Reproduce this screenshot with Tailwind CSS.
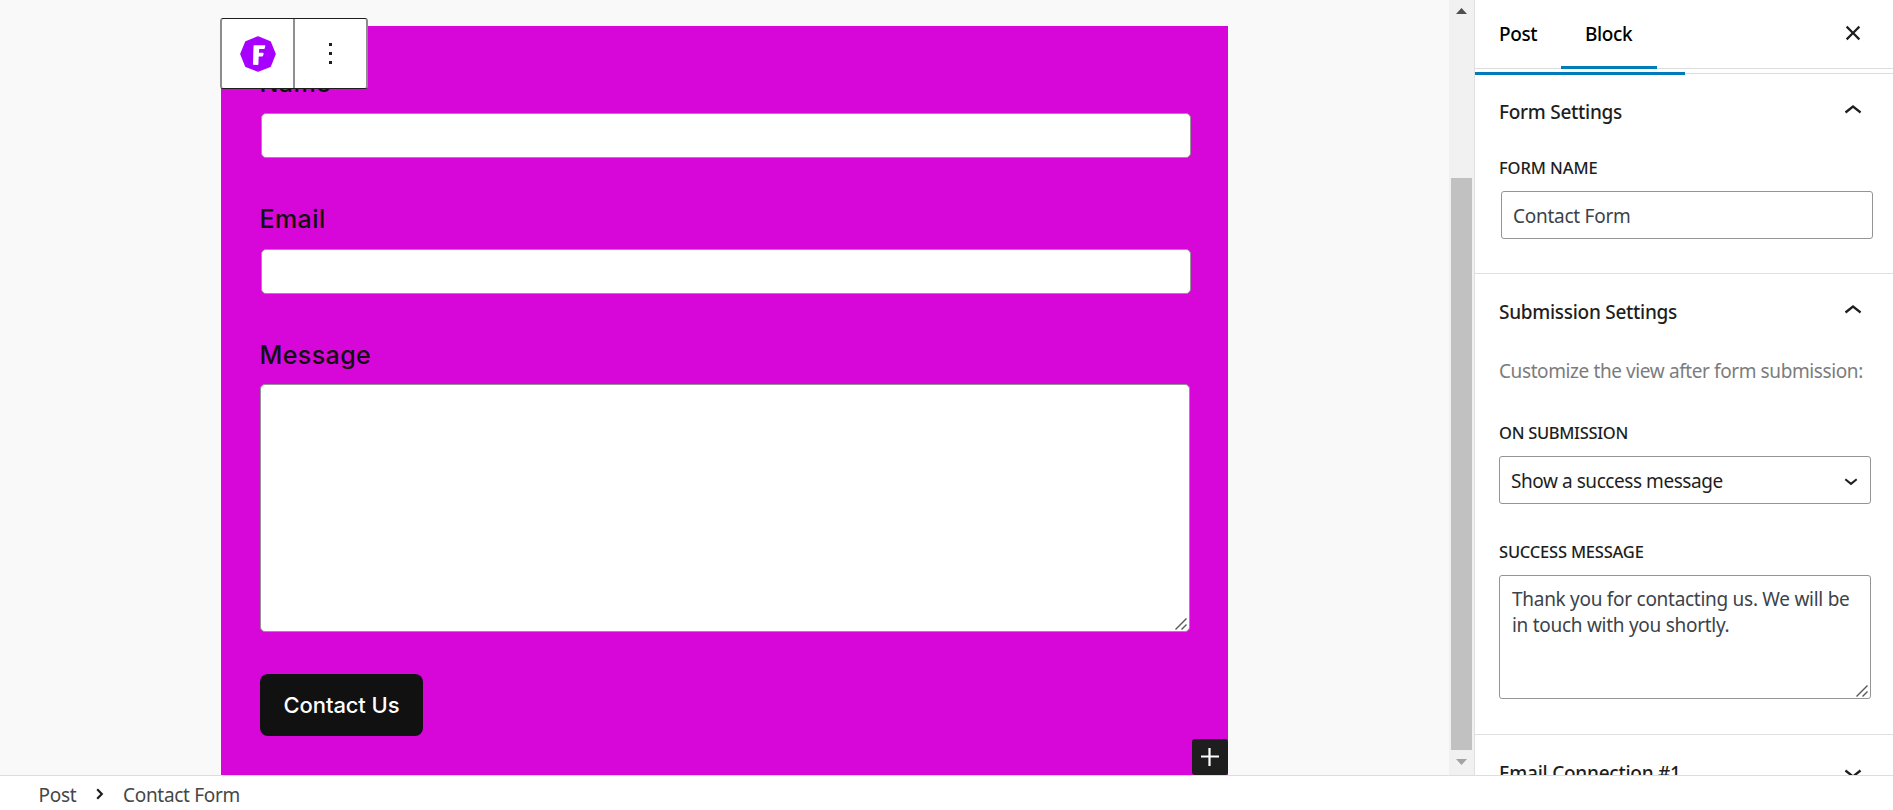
<!DOCTYPE html>
<html lang="en">
<head>
<meta charset="utf-8">
<title>Contact Form</title>
<script src="https://cdn.jsdelivr.net/npm/@tailwindcss/browser@4"></script>
</head>
<body class="flex h-[810px] w-[1893px] flex-col overflow-hidden bg-white font-['Noto_Sans',sans-serif] text-[19px] leading-[26px] text-[#1e1e1e]">
<div class="flex h-[775px] shrink-0 overflow-hidden">
  <!-- Editor canvas -->
  <main class="relative w-[1449px] bg-[#f9f9f9] pt-[26px] pl-[221px]">
    <form class="relative h-[749px] w-[1007px] bg-[#d607d8] pt-[42px] pl-[39px] font-['Inter',sans-serif] text-[#111]">
      <div class="-ml-[0.5px] h-[30px] text-[25px] leading-[30px] font-medium tracking-[0.4px]">Name</div>
      <div class="mt-[15px] ml-px h-[45px] w-[930px] rounded-[5px] border border-[#949494] bg-white"></div>
      <div class="mt-[46px] -ml-[0.5px] h-[30px] text-[25px] leading-[30px] font-medium tracking-[0.4px]">Email</div>
      <div class="mt-[15px] ml-px h-[45px] w-[930px] rounded-[5px] border border-[#949494] bg-white"></div>
      <div class="mt-[46px] -ml-[0.5px] h-[30px] text-[25px] leading-[30px] font-medium tracking-[0.4px]">Message</div>
      <div class="mt-[14px] flex h-[248px] w-[930px] items-end justify-end rounded-[5px] border border-[#949494] bg-white pr-[2px] pb-px">
        <svg class="h-[12px] w-[12px]" viewBox="0 0 12 12" fill="none" stroke="#555" stroke-width="1.4"><path d="M.5 11.5 11.5.5M6.5 11.5l5-5"/></svg>
      </div>
      <button type="button" class="mt-[42px] flex h-[62px] w-[163px] items-center justify-center rounded-[8px] bg-[#111] text-[22px] leading-[28px] font-medium tracking-[-0.1px] text-white">Contact Us</button>
      <button type="button" class="absolute right-0 bottom-0 flex h-[36px] w-[36px] items-center justify-center rounded-[3px] bg-[#1e1e1e]">
        <svg class="h-[18px] w-[18px]" viewBox="0 0 18 18" fill="#fff"><path d="M7.4 0h2.2v7.4H18v2.2H9.6V18H7.4V9.6H0V7.4h7.4z"/></svg>
      </button>
    </form>
    <!-- Block toolbar -->
    <div class="absolute top-[18px] left-[220px] flex h-[71px] w-[148px] rounded-[3px] border-x-2 border-y border-x-[#8c8c8c] border-y-[#1e1e1e] bg-white">
      <div class="flex w-[73px] items-center justify-center border-r-2 border-[#8f8f8f]">
        <svg class="h-[36px] w-[36px]" viewBox="0 0 36 36"><path fill="#a800ff" stroke="#a800ff" stroke-width="1.5" stroke-linejoin="round" d="M18 .9 30.2 6 35.1 18 30.2 30.2 18 35.1 5.8 30.2.9 18 5.8 6z"/><path fill="#fff" d="M14.4 9.2h10.3q.8 0 .6.8l-.5 2.2q-.2.8-1 .8h-4.6l-.3 3.8h4q.8 0 .7.8l-.4 2q-.2.8-.9.8h-3.6l-.3 7.8q-.1.9-1 .8l-3.5-.2q-.9 0-.9-.9l.5-17.9q0-.8.9-.8z"/></svg>
      </div>
      <div class="flex grow flex-col items-center justify-center gap-[6px]">
        <span class="h-[3px] w-[3px] bg-[#1e1e1e]"></span><span class="h-[3px] w-[3px] bg-[#1e1e1e]"></span><span class="h-[3px] w-[3px] bg-[#1e1e1e]"></span>
      </div>
    </div>
  </main>
  <!-- Scrollbar -->
  <div class="flex w-[25px] flex-col items-start bg-[#f1f1f1] pt-[8px]">
    <svg class="ml-[7px] h-[6px] w-[11px]" viewBox="0 0 11 6" fill="#505050"><path d="M0 6 5.5 0 11 6z"/></svg>
    <div class="mt-[164px] ml-[2px] h-[572px] w-[21px] bg-[#c1c1c1]"></div>
    <svg class="mt-[9px] ml-[7px] h-[6px] w-[11px]" viewBox="0 0 11 6" fill="#a3a3a3"><path d="M0 0h11L5.5 6z"/></svg>
  </div>
  <!-- Settings sidebar -->
  <aside class="flex w-[419px] flex-col border-l border-[#e0e0e0] bg-white">
    <div class="flex h-[69px] shrink-0 border-b border-[#ddd] font-medium tracking-[-0.4px] text-black">
      <div class="w-[86px] pt-[21px] pl-[24px]">Post</div>
      <div class="-mb-px h-[69px] w-[96px] border-b-3 border-[#007cba] pt-[21px] pl-[24px]">Block</div>
      <div class="flex grow justify-end pt-[15px] pr-[22px]">
        <svg class="h-[36px] w-[36px]" viewBox="0 0 24 24" fill="#1e1e1e"><path d="M12 13.06l3.712 3.713 1.061-1.06L13.061 12l3.712-3.712-1.06-1.06L12 10.938 8.288 7.227l-1.061 1.06L10.939 12l-3.712 3.712 1.06 1.061L12 13.061z"/></svg>
      </div>
    </div>
    <div class="flex h-[6px] shrink-0 pt-[3px]">
      <div class="h-[3px] w-[210px] bg-[#007cba]"></div>
      <div class="mt-px h-px grow bg-[#ddd]"></div>
    </div>
    <section class="-mt-px h-[200px] shrink-0 border-b border-[#e0e0e0] pl-[24px]">
      <div class="flex h-[74px] items-center justify-between pr-[22px]">
        <h2 class="pt-[2px] font-medium tracking-[-0.27px]">Form Settings</h2>
        <svg class="h-[36px] w-[36px]" viewBox="0 0 24 24" fill="#1e1e1e"><path d="M6.5 12.4L12 8l5.5 4.4-.9 1.2L12 10l-4.5 3.6-1-1.2z"/></svg>
      </div>
      <div class="mt-[10px] h-[20px] text-[16.5px] leading-[20px] font-medium tracking-[-0.1px]">FORM NAME</div>
      <div class="mt-[13px] ml-[2px] flex h-[48px] w-[372px] items-center rounded-[3px] border border-[#949494] pt-[2px] pl-[11px] tracking-[-0.26px] text-[#3c434a]">Contact Form</div>
    </section>
    <section class="h-[461px] shrink-0 border-b border-[#e0e0e0] pl-[24px]">
      <div class="flex h-[74px] items-center justify-between pr-[22px]">
        <h2 class="pt-[2px] font-medium tracking-[-0.28px]">Submission Settings</h2>
        <svg class="h-[36px] w-[36px]" viewBox="0 0 24 24" fill="#1e1e1e"><path d="M6.5 12.4L12 8l5.5 4.4-.9 1.2L12 10l-4.5 3.6-1-1.2z"/></svg>
      </div>
      <p class="mt-[10px] whitespace-nowrap tracking-[-0.4px] text-[#7c7c7c]">Customize the view after form submission:</p>
      <div class="mt-[39px] h-[20px] text-[16.5px] leading-[20px] font-medium tracking-[-0.3px]">ON SUBMISSION</div>
      <div class="mt-[13px] flex h-[48px] w-[372px] items-center justify-between rounded-[3px] border border-[#949494] pr-[12px] pl-[11px] tracking-[-0.44px]"><span class="pt-[2px]">Show a success message</span>
        <svg class="mt-[3px] h-[8px] w-[14px]" viewBox="0 0 14 8" fill="none" stroke="#1e1e1e" stroke-width="2"><path d="m1.3 1.3 5.7 4.6 5.7-4.6"/></svg>
      </div>
      <div class="mt-[38px] h-[20px] text-[16.5px] leading-[20px] font-medium tracking-[-0.2px]">SUCCESS MESSAGE</div>
      <div class="relative mt-[13px] h-[124px] w-[372px] rounded-[3px] border border-[#949494] pt-[10px] pl-[12px] tracking-[-0.28px] whitespace-nowrap text-[#3c434a]">Thank you for contacting us. We will be<br>in touch with you shortly.
        <svg class="absolute right-[2px] bottom-px h-[12px] w-[12px]" viewBox="0 0 12 12" fill="none" stroke="#555" stroke-width="1.4"><path d="M.5 11.5 11.5.5M6.5 11.5l5-5"/></svg>
      </div>
    </section>
    <section class="h-[74px] shrink-0 pl-[24px]">
      <div class="flex h-[74px] items-center justify-between pr-[22px]">
        <h2 class="pt-[2px] font-medium tracking-[-0.25px]">Email Connection #1</h2>
        <svg class="h-[36px] w-[36px]" viewBox="0 0 24 24" fill="#1e1e1e"><path d="M17.5 11.6L12 16l-5.5-4.4.9-1.2L12 14l4.5-3.6 1 1.2z"/></svg>
      </div>
    </section>
  </aside>
</div>
<!-- Breadcrumb -->
<footer class="flex h-[35px] shrink-0 items-center border-t border-[#ddd] pt-[3px] pl-[38.5px] tracking-[-0.3px] text-[#464646]">
  <span class="w-[57.5px]">Post</span>
  <svg class="-mt-[2px] h-[12px] w-[8px]" viewBox="0 0 8 12" fill="none" stroke="#1e1e1e" stroke-width="2.2"><path d="m1.2 1.2 4.6 4.8-4.6 4.8"/></svg>
  <span class="ml-[19px]">Contact Form</span>
</footer>
</body>
</html>
